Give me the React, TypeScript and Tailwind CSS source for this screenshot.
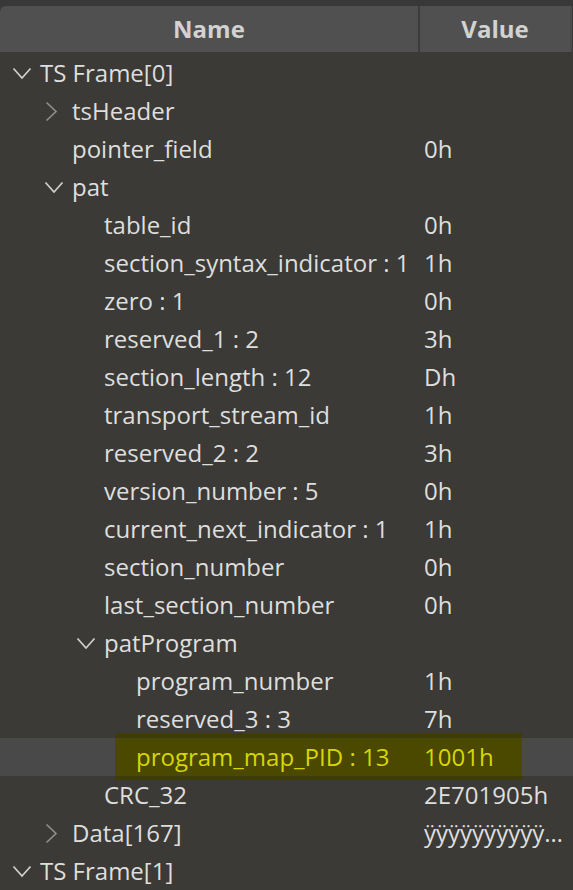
import React from "react";

type Row = { name: string; value?: string; level: number; chev?: "open" | "closed"; hl?: boolean };

const rows: Row[] = [
  { name: "TS Frame[0]", level: 0, chev: "open" },
  { name: "tsHeader", level: 1, chev: "closed" },
  { name: "pointer_field", value: "0h", level: 1 },
  { name: "pat", level: 1, chev: "open" },
  { name: "table_id", value: "0h", level: 2 },
  { name: "section_syntax_indicator : 1", value: "1h", level: 2 },
  { name: "zero : 1", value: "0h", level: 2 },
  { name: "reserved_1 : 2", value: "3h", level: 2 },
  { name: "section_length : 12", value: "Dh", level: 2 },
  { name: "transport_stream_id", value: "1h", level: 2 },
  { name: "reserved_2 : 2", value: "3h", level: 2 },
  { name: "version_number : 5", value: "0h", level: 2 },
  { name: "current_next_indicator : 1", value: "1h", level: 2 },
  { name: "section_number", value: "0h", level: 2 },
  { name: "last_section_number", value: "0h", level: 2 },
  { name: "patProgram", level: 2, chev: "open" },
  { name: "program_number", value: "1h", level: 3 },
  { name: "reserved_3 : 3", value: "7h", level: 3 },
  { name: "program_map_PID : 13", value: "1001h", level: 3, hl: true },
  { name: "CRC_32", value: "2E701905h", level: 2 },
  { name: "Data[167]", value: "ÿÿÿÿÿÿÿÿÿÿ…", level: 1, chev: "closed" },
  { name: "TS Frame[1]", level: 0, chev: "open" },
];

const padClass = ["pl-[12px]", "pl-[44px]", "pl-[76px]", "pl-[108px]"];

function Chevron({ kind }: { kind?: "open" | "closed" }) {
  return (
    <div className="w-[28px] h-[38px] flex items-center shrink-0">
      {kind === "open" && (
        <svg width="20" height="13" viewBox="0 0 20 13" className="mt-[1px]">
          <polyline points="1.5,1.5 10,11 18.5,1.5" fill="none" stroke="#d0d0d0" strokeWidth="1.7" />
        </svg>
      )}
      {kind === "closed" && (
        <svg width="13" height="21" viewBox="0 0 13 21" className="ml-[1px]">
          <polyline points="1.5,1.5 11,10.5 1.5,19.5" fill="none" stroke="#8e8e8e" strokeWidth="1.7" />
        </svg>
      )}
    </div>
  );
}

export default function App() {
  return (
    <div
      className="w-[573px] h-[890px] overflow-hidden bg-[#3b3a36] text-[#dedede]"
      style={{ fontFamily: '"Open Sans", "Noto Sans", sans-serif' }}
    >
      <div className="h-[6px] bg-[#383838]" />
      <div className="flex h-[46px] bg-[#3a3a3a]">
        <div className="w-[418px] rounded-tl-[6px] bg-[#505050] flex items-center justify-center text-[24px] font-bold text-[#d2d2d2]">
          Name
        </div>
        <div className="w-[2px] bg-[#3c3c3c]" />
        <div className="w-[150px] bg-[#505050] flex items-center justify-center text-[24px] font-bold text-[#d2d2d2]">
          Value
        </div>
        <div className="w-[2px] bg-[#4a4a4a]" />
        <div className="flex-1 bg-[#3a3a3a]" />
      </div>
      <div className="pt-[2px]">
        {rows.map((r, i) => (
          <div key={i} className={`relative flex h-[38px] items-center ${r.hl ? "bg-[#494949]" : ""}`}>
            {r.hl && (
              <div className="absolute left-[115px] top-[-5px] w-[407px] h-[47px] bg-[#3e3c08] flex flex-col">
                <div className="h-[5px]" />
                <div className="h-[38px] bg-[#4b4800]" />
              </div>
            )}
            <div className={`relative flex items-center w-[424px] shrink-0 ${padClass[r.level]}`}>
              <Chevron kind={r.chev} />
              <span className={`text-[24px] leading-[38px] whitespace-nowrap ${r.hl ? "text-[#d6d600]" : ""}`}>{r.name}</span>
            </div>
            {r.value && (
              <span className={`relative text-[24px] leading-[38px] whitespace-nowrap ${r.hl ? "text-[#d6d600]" : ""}`}>{r.value}</span>
            )}
          </div>
        ))}
      </div>
    </div>
  );
}
